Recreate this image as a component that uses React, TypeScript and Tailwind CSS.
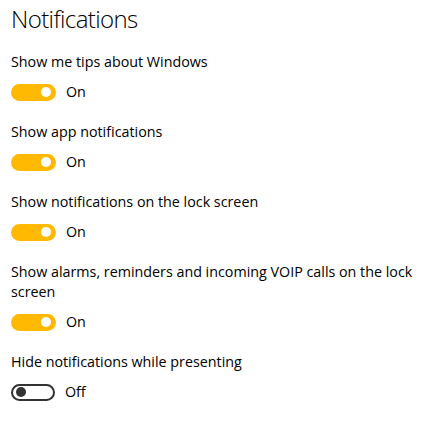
const settings = [
  { label: 'Show me tips about Windows', on: true },
  { label: 'Show app notifications', on: true },
  { label: 'Show notifications on the lock screen', on: true },
  { label: 'Show alarms, reminders and incoming VOIP calls on the lock screen', on: true },
  { label: 'Hide notifications while presenting', on: false },
];

const Toggle = ({ on }: { on: boolean }) =>
  on ? (
    <span className="flex h-[17px] w-[45px] items-center justify-end rounded-full bg-[#ffb900] pr-[5px]">
      <span className="h-[10px] w-[10px] rounded-full bg-white" />
    </span>
  ) : (
    <span className="flex h-[17px] w-[44px] items-center rounded-full border-2 border-[#333] pl-[3px]">
      <span className="h-[10px] w-[10px] rounded-full bg-[#333]" />
    </span>
  );

const App = () => (
  <div className="min-h-screen bg-white pl-[11px] pr-[20px] pt-[3px] text-black" style={{ fontFamily: '"Segoe UI", "Open Sans", "Noto Sans", sans-serif' }}>
    <h1 className="text-[24px] font-light leading-[32px] tracking-[-0.6px]">Notifications</h1>
    <div className="mt-[17px] flex flex-col gap-[20px]">
      {settings.map((s) => (
        <div key={s.label}>
          <p className="text-[14.3px] leading-[20px]">{s.label}</p>
          <div className="mt-[10px] flex items-center gap-[10px]">
            <Toggle on={s.on} />
            <span className="text-[14.3px] leading-[20px]">{s.on ? 'On' : 'Off'}</span>
          </div>
        </div>
      ))}
    </div>
  </div>
);

export default App;
